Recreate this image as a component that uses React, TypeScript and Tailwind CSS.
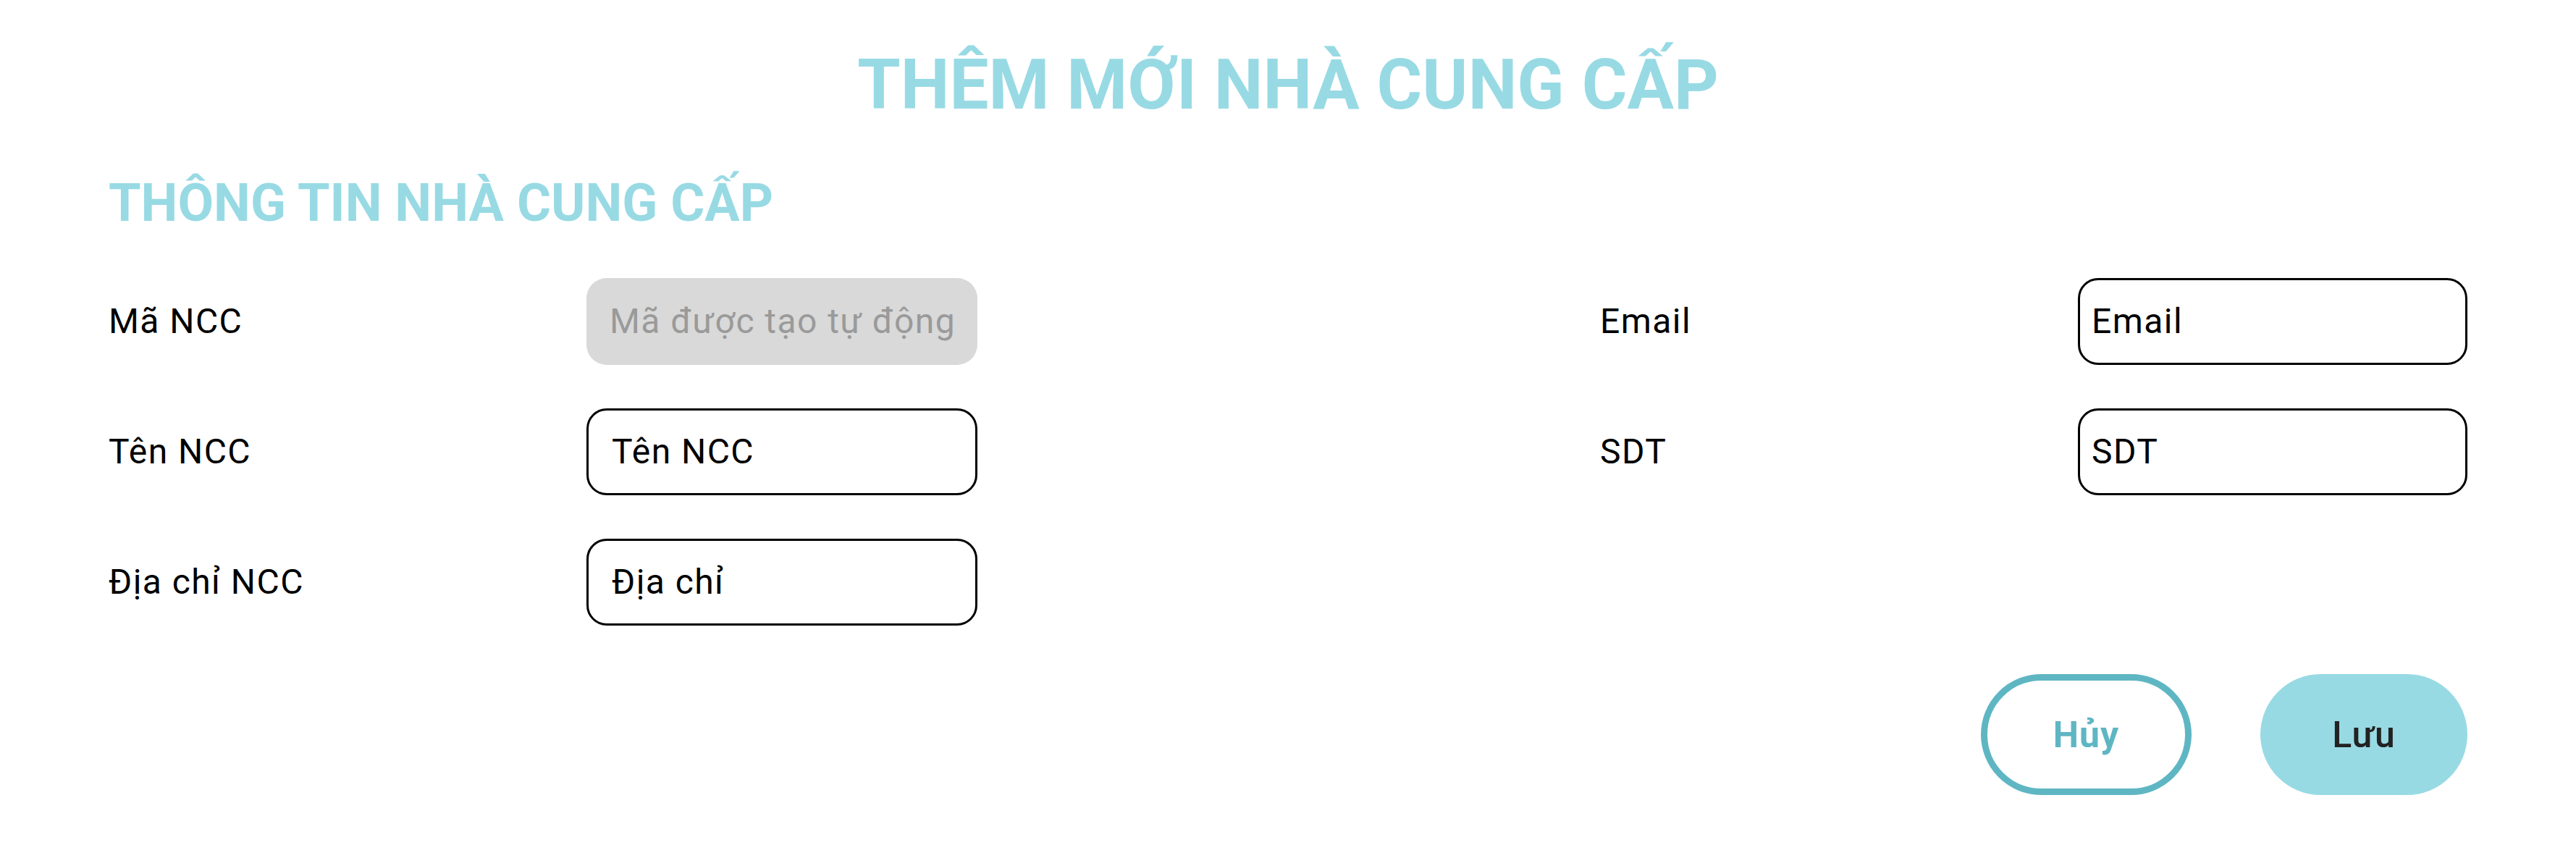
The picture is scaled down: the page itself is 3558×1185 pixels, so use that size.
import React from "react";

const Field = ({ label, value, disabled, padLeft }: { label: string; value: string; disabled?: boolean; padLeft: "left" | "right" }) => (
  <div className="flex items-center h-[120px]">
    <div className="w-[660px] text-[48px] leading-none tracking-[0.03em] text-black">{label}</div>
    {disabled ? (
      <div className="flex items-center w-[540px] h-[120px] rounded-[28px] bg-[#d9d9d9] pl-[32px] text-[48px] leading-none tracking-[0.03em] text-[#9a9a9a] whitespace-nowrap">
        {value}
      </div>
    ) : (
      <div
        className={
          padLeft === "left"
            ? "flex items-center w-[540px] h-[120px] rounded-[28px] border-[3px] border-black pl-[32px] text-[48px] leading-none tracking-[0.03em] text-black"
            : "flex items-center w-[538px] h-[120px] rounded-[28px] border-[3px] border-black pl-[16px] text-[48px] leading-none tracking-[0.03em] text-black"
        }
      >
        {value}
      </div>
    )}
  </div>
);

export default function App() {
  return (
    <div className="w-[3558px] h-[1185px] bg-white font-['Roboto',sans-serif] px-[150px] pt-[69px] overflow-hidden">
      <h1 className="text-center text-[96px] leading-none font-bold text-[#98dae4]">THÊM MỚI NHÀ CUNG CẤP</h1>
      <h2 className="mt-[80px] text-[72px] leading-none font-bold text-[#98dae4]">THÔNG TIN NHÀ CUNG CẤP</h2>
      <div className="mt-[67px] flex justify-between">
        <div className="w-[1200px] flex flex-col gap-[60px]">
          <Field label="Mã NCC" value="Mã được tạo tự động" disabled padLeft="left" />
          <Field label="Tên NCC" value="Tên NCC" padLeft="left" />
          <Field label="Địa chỉ NCC" value="Địa chỉ" padLeft="left" />
        </div>
        <div className="w-[1198px] flex flex-col gap-[60px]">
          <Field label="Email" value="Email" padLeft="right" />
          <Field label="SDT" value="SDT" padLeft="right" />
        </div>
      </div>
      <div className="mt-[67px] flex justify-end gap-[95px]">
        <button className="w-[291px] h-[167px] rounded-full border-[9px] border-[#5fb6c3] bg-white text-[50px] leading-none tracking-[0.02em] font-bold text-[#5fb6c3]">
          Hủy
        </button>
        <button className="w-[286px] h-[167px] rounded-full bg-[#98dae4] text-[50px] leading-none tracking-[0.02em] font-medium text-[#222222]">
          Lưu
        </button>
      </div>
    </div>
  );
}
